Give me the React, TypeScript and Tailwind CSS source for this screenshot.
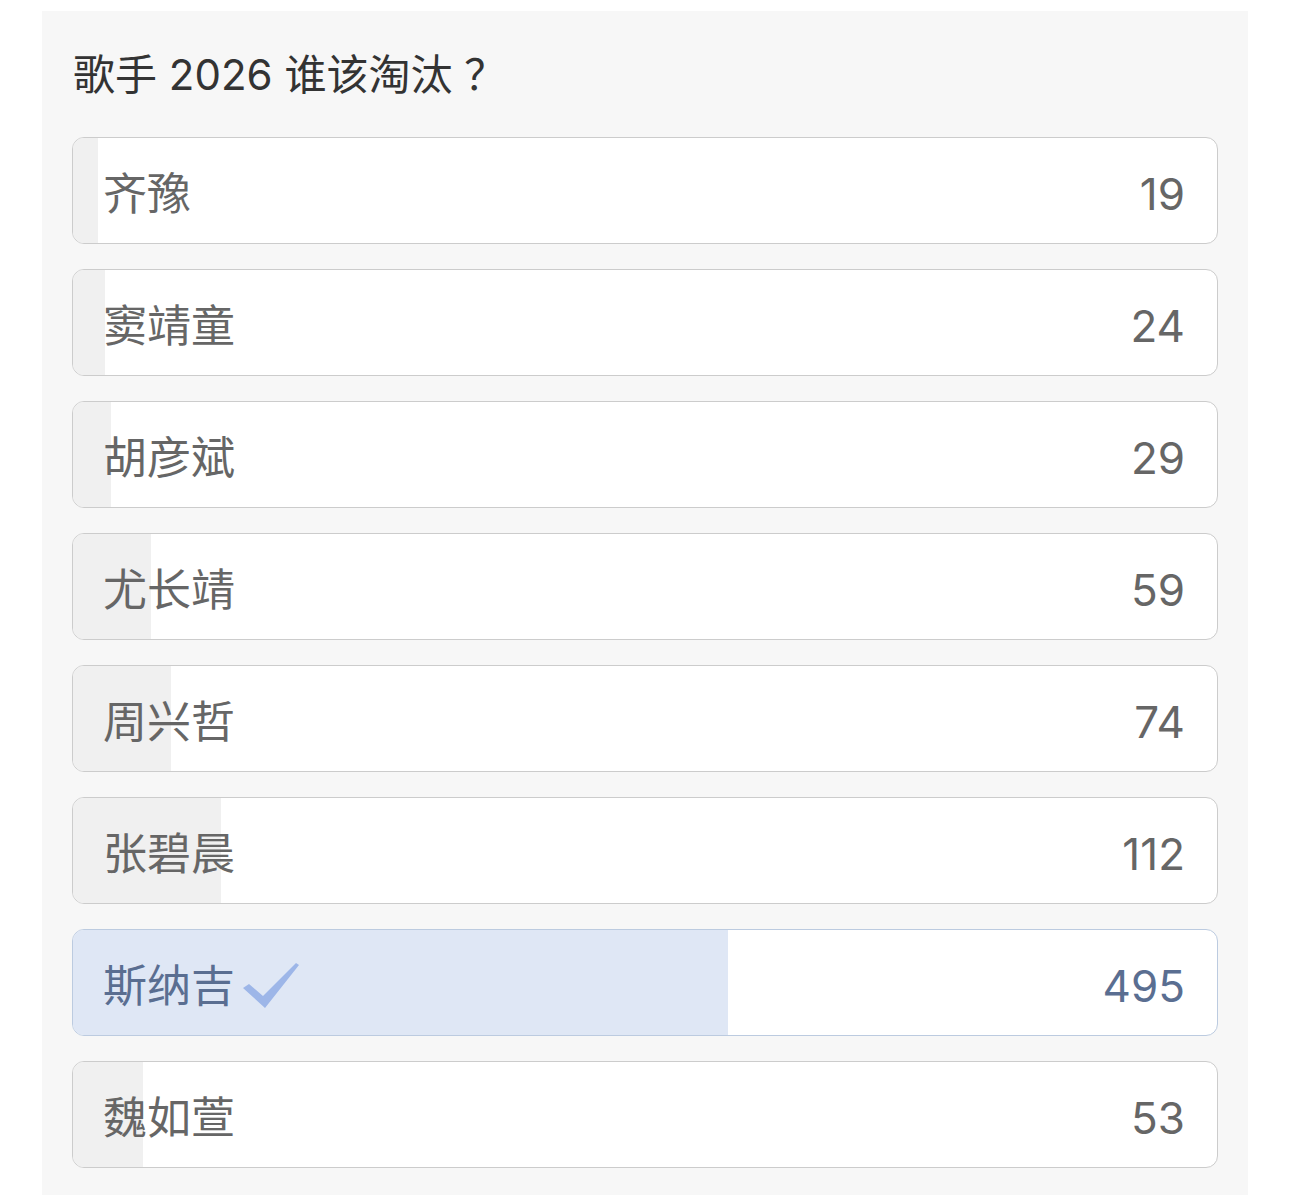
import React from 'react';

type Option = { name: string; votes: number; picked?: boolean };

const options: Option[] = [
  { name: '齐豫', votes: 19 },
  { name: '窦靖童', votes: 24 },
  { name: '胡彦斌', votes: 29 },
  { name: '尤长靖', votes: 59 },
  { name: '周兴哲', votes: 74 },
  { name: '张碧晨', votes: 112 },
  { name: '斯纳吉', votes: 495, picked: true },
  { name: '魏如萱', votes: 53 },
];

const total = options.reduce((s, o) => s + o.votes, 0);

const Check = () => (
  <svg width="56" height="46" viewBox="0 0 56 46" className="ml-2 shrink-0">
    <path d="M0 25 L6 21 L20 33 L53 0 L56 2 L22 45 Z" fill="#9db6e8" />
  </svg>
);

const Row: React.FC<{ option: Option }> = ({ option }) => {
  const pct = (option.votes / total) * 100;
  return (
    <div
      className={`relative h-[107px] overflow-hidden rounded-[12px] border bg-white ${
        option.picked ? 'border-[#bccbe0]' : 'border-[#cccccc]'
      }`}
    >
      <div
        className={`absolute inset-y-0 left-0 ${option.picked ? 'bg-[#dfe7f5]' : 'bg-[#f0f0f0]'}`}
        style={{ width: `${pct}%` }}
      />
      <div
        className={`relative flex h-full items-center justify-between pt-[6px] pl-[30px] pr-[32px] text-[44px] ${
          option.picked ? 'text-[#5a6e91]' : 'text-[#666666]'
        }`}
      >
        <div className="flex items-center">
          <span>{option.name}</span>
          {option.picked && <Check />}
        </div>
        <span>{option.votes}</span>
      </div>
    </div>
  );
};

export default function App() {
  return (
    <div
      className="min-h-[1195px] bg-white pt-[11px]"
      style={{ fontFamily: 'Inter, "Noto Sans CJK SC", sans-serif' }}
    >
      <div className="mx-[42px] min-h-[1184px] bg-[#f7f7f7] px-[30px] pt-[36px] pb-[30px]">
        <h1 className="mb-[34px] pl-[1px] text-[42px] leading-[56px] text-[#333333]">歌手 2026 谁该淘汰 ？</h1>
        <div className="flex flex-col gap-[25px]">
          {options.map((o) => (
            <Row key={o.name} option={o} />
          ))}
        </div>
      </div>
    </div>
  );
}
